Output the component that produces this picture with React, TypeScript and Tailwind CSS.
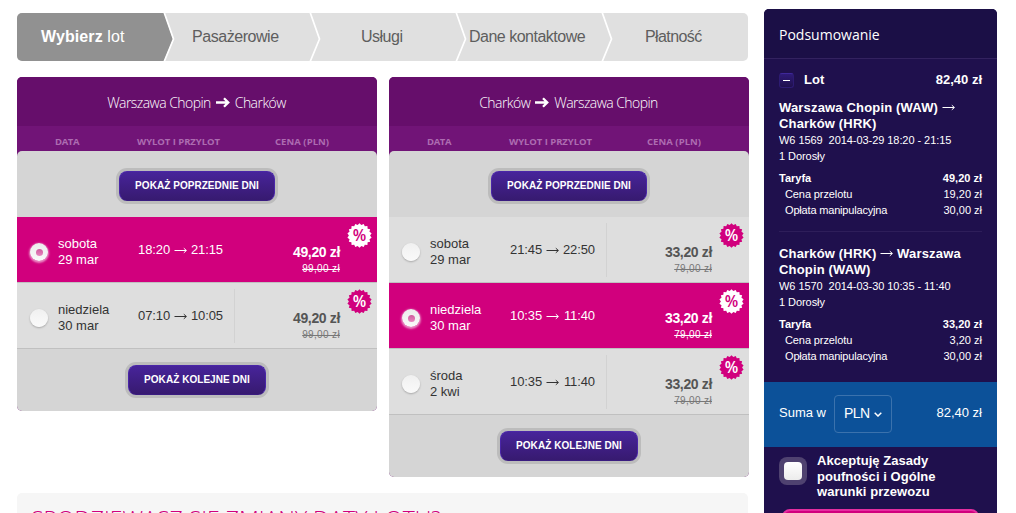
import type { ReactNode } from 'react'
import clsx from 'clsx'

type Flight = {
  day: string
  date: string
  from: string
  to: string
  price: string
  oldPrice: string
  selected?: boolean
}

const outbound: Flight[] = [
  { day: 'sobota', date: '29 mar', from: '18:20', to: '21:15', price: '49,20 zł', oldPrice: '99,00 zł', selected: true },
  { day: 'niedziela', date: '30 mar', from: '07:10', to: '10:05', price: '49,20 zł', oldPrice: '99,00 zł' },
]

const inbound: Flight[] = [
  { day: 'sobota', date: '29 mar', from: '21:45', to: '22:50', price: '33,20 zł', oldPrice: '79,00 zł' },
  { day: 'niedziela', date: '30 mar', from: '10:35', to: '11:40', price: '33,20 zł', oldPrice: '79,00 zł', selected: true },
  { day: 'środa', date: '2 kwi', from: '10:35', to: '11:40', price: '33,20 zł', oldPrice: '79,00 zł' },
]

// Serrated discount seal, 18 teeth
const sealPoints = Array.from({ length: 36 }, (_, i) => {
  const r = i % 2 === 0 ? 12.3 : 10.6
  const a = (i * Math.PI) / 18
  return `${(12.5 + r * Math.sin(a)).toFixed(2)},${(12.5 - r * Math.cos(a)).toFixed(2)}`
}).join(' ')

function Steps() {
  return (
    <nav className="flex h-12 w-[731px] overflow-hidden rounded-[5px] bg-[#e0e0e0] text-[16px] leading-[48px] text-[#5e5e5e]">
      <div className="flex w-[147px] bg-[#919191] pl-[24px] text-white">
        <span className="whitespace-pre tracking-[0.1px]"><b>Wybierz</b> lot</span>
      </div>
      <Chevron first />
      <div className="w-[136px] pl-[18px] tracking-[-0.45px]">Pasażerowie</div>
      <Chevron />
      <div className="w-[136px] pl-[41px] tracking-[-0.5px]">Usługi</div>
      <Chevron />
      <div className="w-[136px] pl-[3px] tracking-[-0.5px] whitespace-nowrap">Dane kontaktowe</div>
      <Chevron />
      <div className="pl-[33px] tracking-[-0.6px]">Płatność</div>
    </nav>
  )
}

function Chevron({ first = false }: { first?: boolean }) {
  return (
    <svg className="h-12 w-[10px] shrink-0 overflow-visible" viewBox="0 0 10 48" fill="none">
      {first && <path d="M-1 0H0L9 26L0 48H-1Z" fill="#919191" />}
      <path d="M0 -1L9.5 26L0 49" stroke="#fff" strokeWidth={1.7} />
    </svg>
  )
}

function BoldArrow() {
  return (
    <svg className="h-[11px] w-[14px]" viewBox="0 0 14 11" fill="none" stroke="#fff" strokeWidth={2.3}>
      <path d="M0 5.5H12M8 1.2L12.3 5.5L8 9.8" />
    </svg>
  )
}

function ThinArrow() {
  return (
    <svg className="inline-block h-[7px] w-[13px] align-[1px]" viewBox="0 0 13 7" fill="none" stroke="currentColor" strokeWidth={1}>
      <path d="M0.5 3.5H12.2" />
      <path d="M9.8 1.2L12.4 3.5L9.8 5.8" />
    </svg>
  )
}

function DaysButton({ children, className }: { children: ReactNode; className: string }) {
  return (
    <button
      className={clsx(
        'h-[30px] rounded-[8px] border border-[#4a26a8] border-b-[#3a1c80] bg-gradient-to-b from-[#47249a] to-[#371a70] text-[10px] font-bold leading-[28px] tracking-[0.05px] whitespace-nowrap text-white ring-3 ring-[#bcbcbc]',
        className,
      )}
    >
      {children}
    </button>
  )
}

function FlightRow({ flight }: { flight: Flight }) {
  const { selected } = flight
  return (
    <div
      className={clsx(
        'relative flex h-[66px] border-b border-[#c0c0c0]',
        selected ? 'bg-[#d1007d] text-white' : 'bg-[#dedede] text-[#333]',
      )}
    >
      <div className="w-[41px] pt-[26px] pl-[13px]">
        <div
          className={clsx(
            'flex h-[18px] w-[18px] items-center justify-center rounded-full bg-gradient-to-b',
            selected
              ? 'from-[#ececec] to-[#fafafa] shadow-[0_1px_2px_1px_rgba(255,255,255,0.55)]'
              : 'from-[#f0f0f0] to-[#fafafa] shadow-[0_1px_2px_rgba(0,0,0,0.25)]',
          )}
        >
          {selected && <span className="h-[7px] w-[7px] rounded-full bg-gradient-to-b from-[#cf5a9e] to-[#e887bf]" />}
        </div>
      </div>
      <div className="w-[80px] pt-[19px] text-[13px] leading-4">
        <div>{flight.day}</div>
        <div>{flight.date}</div>
      </div>
      <div className="flex w-[85px] items-center justify-between self-start pt-[25px] text-[13px] leading-4 tracking-[-0.1px]">
        <span>{flight.from}</span>
        <ThinArrow />
        <span>{flight.to}</span>
      </div>
      <div className={clsx('mt-[6px] ml-[11px] h-[54px] w-px', selected ? 'bg-transparent' : 'bg-[#d2d2d2]')} />
      <div className="w-[105px] pt-[27px] text-right">
        <div className={clsx('text-[14px] font-bold leading-4 tracking-[-0.35px]', !selected && 'text-[#555]')}>{flight.price}</div>
        <div className={clsx('pt-px text-[10px] leading-4 tracking-[0.35px] line-through', !selected && 'text-[#777]')}>{flight.oldPrice}</div>
      </div>
      <svg className="absolute top-[6px] right-[5px] h-[25px] w-[25px]" viewBox="0 0 25 25">
        <polygon points={sealPoints} fill={selected ? '#fff' : '#d1007d'} />
        <text x="12.5" y="18.3" textAnchor="middle" fontSize="15.5" fontWeight="600" fontFamily="Open Sans, sans-serif" textLength="13.5" lengthAdjust="spacingAndGlyphs" fill={selected ? '#d1007d' : '#fff'}>%</text>
      </svg>
    </div>
  )
}

function FlightColumn({ from, to, flights }: { from: string; to: string; flights: Flight[] }) {
  return (
    <section className="w-[360px] overflow-hidden rounded-[5px] bg-[#711477]">
      <h2 className="flex h-[49px] items-center justify-center gap-[5px] bg-[#660e6b] pt-px pr-px font-['Open_Sans'] text-[14px] font-light tracking-[-0.55px] whitespace-nowrap text-white">
        <span>{from}</span>
        <BoldArrow />
        <span>{to}</span>
      </h2>
      <div className="flex h-[25px] pt-[7px] pl-[38px] font-['Open_Sans'] text-[9.5px] font-bold leading-[17px] text-[#ad6cb1]">
        <span className="w-[82px] tracking-[-0.4px]">DATA</span>
        <span className="w-[138px] tracking-[-0.05px]">WYLOT I PRZYLOT</span>
        <span className="tracking-[0.05px]">CENA (PLN)</span>
      </div>
      <div className="rounded-t-[5px] bg-[#d5d5d5]">
        <div className="flex h-[66px] justify-center pt-5">
          <DaysButton className="w-[156px]">POKAŻ POPRZEDNIE DNI</DaysButton>
        </div>
        {flights.map((flight) => (
          <FlightRow key={flight.date} flight={flight} />
        ))}
        <div className="flex h-[62px] justify-center pt-4">
          <DaysButton className="w-[138px]">POKAŻ KOLEJNE DNI</DaysButton>
        </div>
      </div>
    </section>
  )
}

type Leg = { title: ReactNode; info: string; fare: string; base: string }

function SummaryLeg({ title, info, fare, base }: Leg) {
  return (
    <div className="text-[11px] leading-4">
      <h3 className="text-[13px] font-bold leading-4 tracking-[0.17px]">{title}</h3>
      <p className="tracking-[-0.06px] whitespace-pre">{info}</p>
      <p className="tracking-[-0.06px]">1 Dorosły</p>
      <div className="mt-[6px] flex justify-between font-bold">
        <span>Taryfa</span>
        <span>{fare}</span>
      </div>
      <div className="flex justify-between pl-[6px]">
        <span className="tracking-[-0.1px]">Cena przelotu</span>
        <span>{base}</span>
      </div>
      <div className="flex justify-between pl-[6px]">
        <span className="tracking-[-0.18px]">Opłata manipulacyjna</span>
        <span>30,00 zł</span>
      </div>
    </div>
  )
}

function Summary() {
  return (
    <aside className="h-[520px] w-[233px] overflow-hidden rounded-t-[5px] bg-[#1f104d] text-white">
      <h2 className="h-[50px] border-b border-[#33225f] bg-[#1b0f46] pl-[15px] font-['Open_Sans'] text-[14px] font-medium leading-[51px]">Podsumowanie</h2>
      <div className="h-[323px] px-[15px] pt-[13px]">
        <div className="flex h-4 items-center text-[13px] font-bold">
          <span className="flex h-[15px] w-[15px] items-center justify-center rounded-[3px] border border-[#2d1b72] border-t-[#3f289a] bg-gradient-to-b from-[#2f1a78] to-[#1f104d]">
            <span className="h-px w-[7px] bg-white" />
          </span>
          <span className="ml-[10px]">Lot</span>
          <span className="ml-auto">82,40 zł</span>
        </div>
        <div className="mt-[12px]">
          <SummaryLeg
            title={<>Warszawa Chopin (WAW) <ThinArrow /><br />Charków (HRK)</>}
            info="W6 1569  2014-03-29 18:20 - 21:15"
            fare="49,20 zł"
            base="19,20 zł"
          />
        </div>
        <hr className="mt-[13px] mb-[14px] border-[#2e1e5a]" />
        <SummaryLeg
          title={<>Charków (HRK) <ThinArrow /> Warszawa<br />Chopin (WAW)</>}
          info="W6 1570  2014-03-30 10:35 - 11:40"
          fare="33,20 zł"
          base="3,20 zł"
        />
      </div>
      <div className="flex h-[65px] items-center bg-[#0c5199] px-[15px] pb-[3px] text-[13px]">
        <span>Suma w</span>
        <button className="mt-[1px] ml-2 flex h-[38px] w-[58px] items-center rounded-[4px] border border-[#3b72ad] pl-[9px] text-[14px] tracking-[-0.5px]">
          PLN
          <svg className="mt-[2px] ml-[4px] h-[5px] w-[8px]" viewBox="0 0 8 5" fill="none" stroke="#fff" strokeWidth={1.5}>
            <path d="M0.7 0.7L4 4L7.3 0.7" />
          </svg>
        </button>
        <span className="ml-auto">82,40 zł</span>
      </div>
      <div className="flex h-[62px] pt-[6px] pl-[15px]">
        <div className="mt-[4px] flex h-7 w-7 shrink-0 items-center justify-center rounded-[8px] bg-[#4f4270]">
          <span className="h-[18px] w-[18px] rounded-[4px] bg-gradient-to-b from-white to-[#ececec]" />
        </div>
        <p className="ml-[10px] text-[13px] font-bold leading-[15.5px] tracking-[0.05px]">
          Akceptuję Zasady<br />poufności i Ogólne<br />warunki przewozu
        </p>
      </div>
      <div className="mx-[18px] h-10 rounded-[8px] border-2 border-[#e52ea0] bg-[#d1007d]" />
    </aside>
  )
}

export default function App() {
  return (
    <main className="flex h-[513px] w-[1016px] items-start gap-[15px] overflow-hidden bg-white pl-[17px] font-['Liberation_Sans',sans-serif]">
      <div className="w-[732px] shrink-0 pt-[13px]">
        <Steps />
        <div className="mt-4 flex h-[400px] items-start gap-3">
          <FlightColumn from="Warszawa Chopin" to="Charków" flights={outbound} />
          <FlightColumn from="Charków" to="Warszawa Chopin" flights={inbound} />
        </div>
        <section className="mt-4 h-[60px] w-[731px] rounded-t-[5px] bg-[#f6f6f6] pt-[12px] pl-[14px]">
          <h2 className="font-['Open_Sans'] text-[23px] font-light leading-7 whitespace-nowrap text-[#d1007d]">SPODZIEWASZ SIĘ ZMIANY DATY LOTU?</h2>
        </section>
      </div>
      <div className="pt-[9px]">
        <Summary />
      </div>
    </main>
  )
}
